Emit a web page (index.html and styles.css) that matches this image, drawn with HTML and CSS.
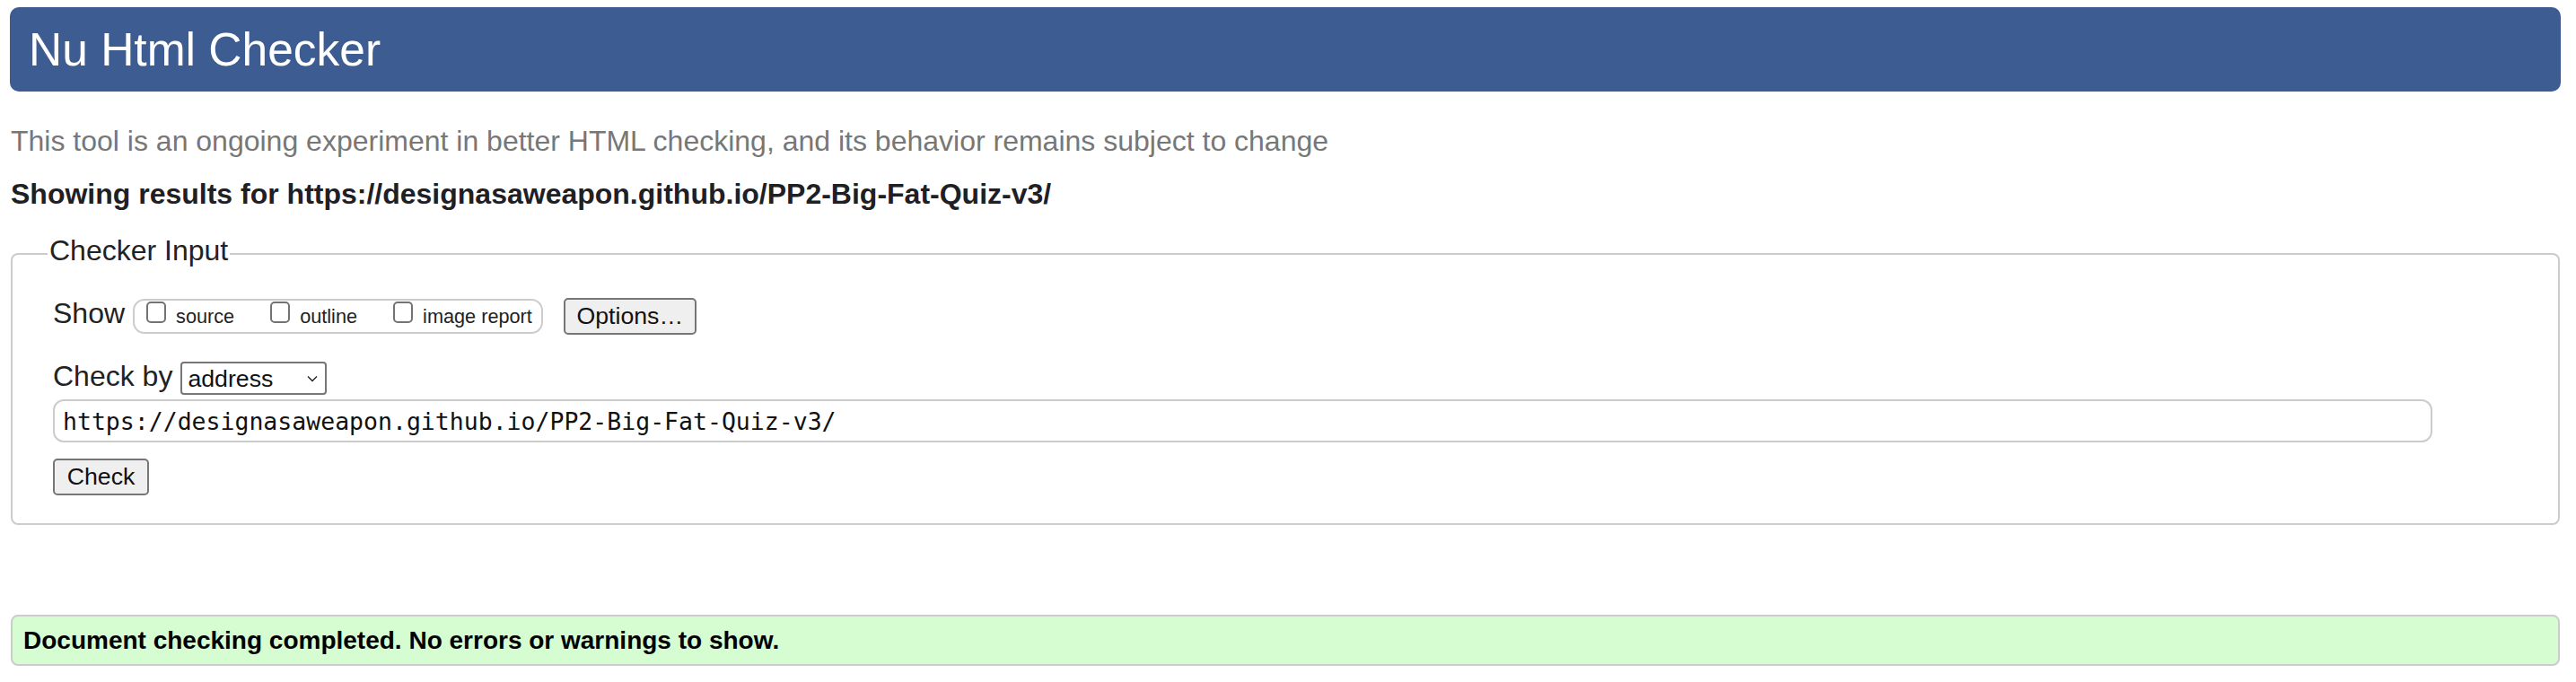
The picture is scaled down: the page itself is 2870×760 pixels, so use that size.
FILE: index.html
```html
<!DOCTYPE html>
<html lang="en">
<head>
<meta charset="utf-8">
<title>Nu Html Checker</title>
<link rel="stylesheet" href="styles.css">
</head>
<body>
<header class="masthead">
  <h1 class="masthead-title">Nu Html Checker</h1>
</header>
<p class="tagline">This tool is an ongoing experiment in better HTML checking, and its behavior remains subject to change</p>
<p class="results-for">Showing results for https://designasaweapon.github.io/PP2-Big-Fat-Quiz-v3/</p>
<form class="checker-form" onsubmit="return false">
  <fieldset class="checker">
    <legend class="checker-legend">Checker Input</legend>
    <div class="row row-show">
      <span class="row-label">Show</span>
      <div class="pill">
        <label class="opt"><input class="box" type="checkbox"><span class="opt-text">source</span></label>
        <label class="opt"><input class="box" type="checkbox"><span class="opt-text">outline</span></label>
        <label class="opt"><input class="box" type="checkbox"><span class="opt-text">image report</span></label>
      </div>
      <button class="btn btn-options" type="button">Options…</button>
    </div>
    <div class="row row-by">
      <span class="row-label">Check by</span>
      <span class="select-wrap">
        <select class="select"><option>address</option></select>
        <svg class="chev" width="12" height="8" viewBox="0 0 12 8"><path d="M1 1.5 L6 6.5 L11 1.5" fill="none" stroke="#222" stroke-width="1.4"/></svg>
      </span>
    </div>
    <div class="row row-url">
      <input class="url" type="text" value="https://designasaweapon.github.io/PP2-Big-Fat-Quiz-v3/">
    </div>
    <div class="row row-check">
      <button class="btn btn-check" type="button">Check</button>
    </div>
  </fieldset>
</form>
<div class="success">Document checking completed. No errors or warnings to show.</div>
</body>
</html>
```
FILE: styles.css
```css
html, body {
  margin: 0;
  background: #ffffff;
}
body {
  padding: 8px 18px 0 12px;
  font-family: "Liberation Sans", Arial, Helvetica, sans-serif;
  color: #222;
}
.masthead {
  height: 94px;
  margin: 0 -1px;
  padding: 0 21px;
  background: #3d5c91;
  border-radius: 10px;
  display: flex;
  align-items: center;
  box-sizing: border-box;
}
.masthead-title {
  margin: 0;
  font-size: 51.5px;
  font-weight: normal;
  color: #ffffff;
  line-height: 60px;
}
.tagline {
  margin: 37px 0 0;
  font-size: 32px;
  line-height: 37px;
  color: #777777;
}
.results-for {
  margin: 22px 0 0;
  font-size: 32px;
  line-height: 37px;
  font-weight: bold;
  color: #1f2024;
}
.checker-form {
  margin: 26px 0 0;
}
.checker {
  margin: 0;
  border: 2px solid #cccccc;
  border-radius: 8px;
  padding: 28px 0 31px 45px;
  min-width: 0;
}
.checker-legend {
  font-size: 32px;
  line-height: 37px;
  padding: 0 2px 6px;
  margin-left: -6px;
  color: #222;
}
.row {
  display: flex;
  align-items: center;
}
.row-label {
  font-size: 32px;
  line-height: 37px;
  color: #222;
}
.row-show {
  height: 41px;
}
.row-show .row-label {
  margin-bottom: 7px;
}
.pill {
  margin-left: 9px;
  height: 39px;
  box-sizing: border-box;
  border: 2px solid #cccccc;
  border-radius: 13px;
  padding: 0 10px 0 13px;
  display: flex;
  align-items: center;
  gap: 40px;
}
.opt {
  display: flex;
  align-items: center;
  gap: 11px;
}
.box {
  appearance: none;
  -webkit-appearance: none;
  margin: 0 0 10px;
  width: 22px;
  height: 24px;
  box-sizing: border-box;
  border: 2px solid #737373;
  border-radius: 5px;
  background: #fff;
}
.opt-text {
  font-size: 21.7px;
  line-height: 25px;
  color: #222;
}
.btn {
  font-family: "Liberation Sans", Arial, Helvetica, sans-serif;
  font-size: 26.7px;
  color: #111;
  background: #efefef;
  border: 2px solid #767676;
  border-radius: 5px;
  height: 41px;
  padding: 0;
  box-sizing: border-box;
}
.btn-options {
  margin-left: 23px;
  width: 148px;
}
.row-by {
  margin-top: 30px;
  height: 37px;
}
.row-by .row-label {
  margin-bottom: 5px;
}
.select-wrap {
  position: relative;
  margin-left: 9px;
  display: flex;
}
.select {
  appearance: none;
  -webkit-appearance: none;
  width: 163px;
  height: 37px;
  box-sizing: border-box;
  border: 2px solid #767676;
  border-radius: 4px;
  background: #fff;
  padding: 0 0 0 6px;
  font-family: "Liberation Sans", Arial, Helvetica, sans-serif;
  font-size: 26.7px;
  color: #111;
}
.chev {
  position: absolute;
  right: 10px;
  top: 15px;
}
.row-url {
  margin-top: 5px;
}
.url {
  width: 95%;
  height: 48px;
  box-sizing: border-box;
  border: 2px solid #cccccc;
  border-radius: 12px;
  padding: 0 0 0 9px;
  font-family: "DejaVu Sans Mono", "Liberation Mono", monospace;
  font-size: 26.5px;
  color: #111;
  background: #fff;
}
.row-check {
  margin-top: 18px;
}
.btn-check {
  width: 107px;
}
.success {
  margin-top: 100px;
  height: 57px;
  box-sizing: border-box;
  border: 2px solid #cccccc;
  border-radius: 8px;
  background: #d6fcd2;
  padding: 0 12px;
  display: flex;
  align-items: center;
  font-size: 28px;
  font-weight: bold;
  color: #000;
}
```
